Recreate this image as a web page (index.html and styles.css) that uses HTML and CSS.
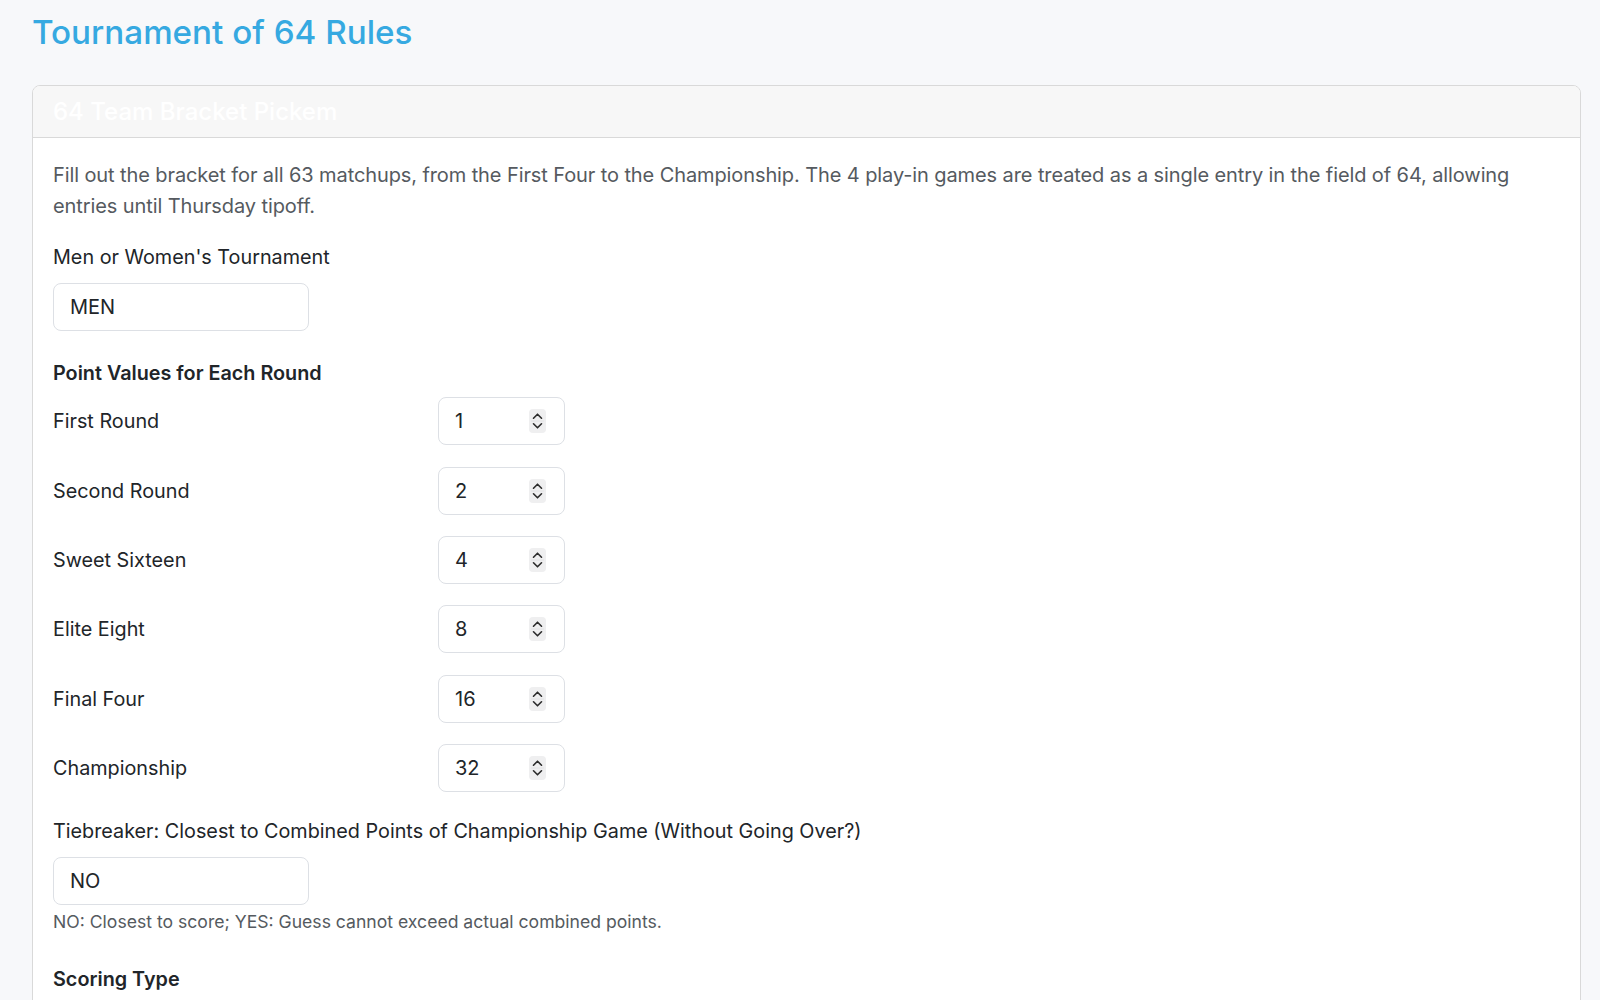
FILE: index.html
```html
<!DOCTYPE html>
<html lang="en">
<head>
  <meta charset="UTF-8">
  <title>Tournament of 64 Rules</title>
  <link rel="stylesheet" href="styles.css">
</head>
<body>
  <h1 class="page-title">Tournament of 64 Rules</h1>

  <div class="card">
    <div class="card-header">64 Team Bracket Pickem</div>
    <div class="card-body">
      <p class="intro">Fill out the bracket for all 63 matchups, from the First Four to the Championship. The 4 play-in games are treated as a single entry in the field of 64, allowing entries until Thursday tipoff.</p>

      <div class="field field-gender">
        <label class="field-label" for="gender">Men or Women's Tournament</label>
        <input class="text-input" id="gender" type="text" value="MEN">
      </div>

      <div class="field field-points">
        <div class="section-title">Point Values for Each Round</div>

        <div class="round-row">
          <label class="round-label">First Round</label>
          <div class="num-box">
            <input class="num-input" type="text" value="1">
            <svg class="spinner" width="17" height="24" viewBox="0 0 17 24"><rect width="17" height="24" rx="4" fill="#efeff0"/><line x1="2" y1="12" x2="15" y2="12" stroke="#e2e2e4" stroke-width="1"/><path d="M4.5 9.2 L8.5 5.2 L12.5 9.2" fill="none" stroke="#2b2b2b" stroke-width="1.6" stroke-linecap="round" stroke-linejoin="round"/><path d="M4.5 14.8 L8.5 18.8 L12.5 14.8" fill="none" stroke="#2b2b2b" stroke-width="1.6" stroke-linecap="round" stroke-linejoin="round"/></svg>
          </div>
        </div>

        <div class="round-row">
          <label class="round-label">Second Round</label>
          <div class="num-box">
            <input class="num-input" type="text" value="2">
            <svg class="spinner" width="17" height="24" viewBox="0 0 17 24"><rect width="17" height="24" rx="4" fill="#efeff0"/><line x1="2" y1="12" x2="15" y2="12" stroke="#e2e2e4" stroke-width="1"/><path d="M4.5 9.2 L8.5 5.2 L12.5 9.2" fill="none" stroke="#2b2b2b" stroke-width="1.6" stroke-linecap="round" stroke-linejoin="round"/><path d="M4.5 14.8 L8.5 18.8 L12.5 14.8" fill="none" stroke="#2b2b2b" stroke-width="1.6" stroke-linecap="round" stroke-linejoin="round"/></svg>
          </div>
        </div>

        <div class="round-row">
          <label class="round-label">Sweet Sixteen</label>
          <div class="num-box">
            <input class="num-input" type="text" value="4">
            <svg class="spinner" width="17" height="24" viewBox="0 0 17 24"><rect width="17" height="24" rx="4" fill="#efeff0"/><line x1="2" y1="12" x2="15" y2="12" stroke="#e2e2e4" stroke-width="1"/><path d="M4.5 9.2 L8.5 5.2 L12.5 9.2" fill="none" stroke="#2b2b2b" stroke-width="1.6" stroke-linecap="round" stroke-linejoin="round"/><path d="M4.5 14.8 L8.5 18.8 L12.5 14.8" fill="none" stroke="#2b2b2b" stroke-width="1.6" stroke-linecap="round" stroke-linejoin="round"/></svg>
          </div>
        </div>

        <div class="round-row">
          <label class="round-label">Elite Eight</label>
          <div class="num-box">
            <input class="num-input" type="text" value="8">
            <svg class="spinner" width="17" height="24" viewBox="0 0 17 24"><rect width="17" height="24" rx="4" fill="#efeff0"/><line x1="2" y1="12" x2="15" y2="12" stroke="#e2e2e4" stroke-width="1"/><path d="M4.5 9.2 L8.5 5.2 L12.5 9.2" fill="none" stroke="#2b2b2b" stroke-width="1.6" stroke-linecap="round" stroke-linejoin="round"/><path d="M4.5 14.8 L8.5 18.8 L12.5 14.8" fill="none" stroke="#2b2b2b" stroke-width="1.6" stroke-linecap="round" stroke-linejoin="round"/></svg>
          </div>
        </div>

        <div class="round-row">
          <label class="round-label">Final Four</label>
          <div class="num-box">
            <input class="num-input" type="text" value="16">
            <svg class="spinner" width="17" height="24" viewBox="0 0 17 24"><rect width="17" height="24" rx="4" fill="#efeff0"/><line x1="2" y1="12" x2="15" y2="12" stroke="#e2e2e4" stroke-width="1"/><path d="M4.5 9.2 L8.5 5.2 L12.5 9.2" fill="none" stroke="#2b2b2b" stroke-width="1.6" stroke-linecap="round" stroke-linejoin="round"/><path d="M4.5 14.8 L8.5 18.8 L12.5 14.8" fill="none" stroke="#2b2b2b" stroke-width="1.6" stroke-linecap="round" stroke-linejoin="round"/></svg>
          </div>
        </div>

        <div class="round-row">
          <label class="round-label">Championship</label>
          <div class="num-box">
            <input class="num-input" type="text" value="32">
            <svg class="spinner" width="17" height="24" viewBox="0 0 17 24"><rect width="17" height="24" rx="4" fill="#efeff0"/><line x1="2" y1="12" x2="15" y2="12" stroke="#e2e2e4" stroke-width="1"/><path d="M4.5 9.2 L8.5 5.2 L12.5 9.2" fill="none" stroke="#2b2b2b" stroke-width="1.6" stroke-linecap="round" stroke-linejoin="round"/><path d="M4.5 14.8 L8.5 18.8 L12.5 14.8" fill="none" stroke="#2b2b2b" stroke-width="1.6" stroke-linecap="round" stroke-linejoin="round"/></svg>
          </div>
        </div>
      </div>

      <div class="field field-tiebreaker">
        <label class="field-label" for="tiebreaker">Tiebreaker: Closest to Combined Points of Championship Game (Without Going Over?)</label>
        <input class="text-input" id="tiebreaker" type="text" value="NO">
        <div class="help-text">NO: Closest to score; YES: Guess cannot exceed actual combined points.</div>
      </div>

      <div class="field">
        <div class="section-title">Scoring Type</div>
      </div>
    </div>
  </div>
</body>
</html>
```
FILE: styles.css
```css
body {
  margin: 0;
  padding: 0 19px 40px 32px;
  background: #f7f8fa;
  font-family: 'Inter', 'Noto Sans', sans-serif;
  color: #212529;
}

.page-title {
  margin: 11px 0 31px;
  font-size: 33.2px;
  line-height: 43px;
  font-weight: 500;
  color: #36a9e1;
}

.card {
  background: #ffffff;
  border: 1px solid #d9d9d9;
  border-radius: 8px;
  overflow: hidden;
}

.card-header {
  background: #f7f7f7;
  border-bottom: 1px solid #d9d9d9;
  padding: 11px 20px;
  font-size: 24px;
  line-height: 29px;
  font-weight: 500;
  color: #ffffff;
}

.card-body {
  padding: 22px 20px 20px;
}

.intro {
  margin: 0 0 22px;
  font-size: 20px;
  letter-spacing: -0.1px;
  line-height: 30.6px;
  color: #555a60;
}

.field-label {
  display: block;
  margin-bottom: 12px;
  padding-top: 1px;
  font-size: 19.8px;
  line-height: 27px;
}

.text-input {
  display: block;
  box-sizing: border-box;
  width: 256px;
  height: 48px;
  padding: 0 16px;
  border: 1px solid #dde0e5;
  border-radius: 8px;
  font-family: inherit;
  font-size: 20px;
  color: #212529;
  background: #fff;
}

.field-gender {
  margin-bottom: 29px;
}

.section-title {
  margin-bottom: 10px;
  font-size: 19.8px;
  line-height: 27px;
  font-weight: 600;
}

.round-row {
  display: flex;
  align-items: center;
  margin-bottom: 21.4px;
}

.round-row:last-child {
  margin-bottom: 0;
}

.round-label {
  width: 385px;
  flex-shrink: 0;
  font-size: 19.8px;
}

.num-box {
  display: flex;
  align-items: center;
  box-sizing: border-box;
  width: 127px;
  height: 48px;
  padding: 0 18px 0 16px;
  border: 1px solid #dde0e5;
  border-radius: 8px;
  background: #fff;
}

.num-input {
  flex: 1;
  min-width: 0;
  border: none;
  padding: 0;
  outline: none;
  font-family: inherit;
  font-size: 20px;
  color: #212529;
  background: transparent;
}

.spinner {
  flex-shrink: 0;
}

.field-points {
  margin-bottom: 25px;
}

.help-text {
  margin-top: 5px;
  font-size: 17.6px;
  line-height: 24px;
  color: #555a60;
}

.field-tiebreaker {
  margin-bottom: 32px;
}
```
